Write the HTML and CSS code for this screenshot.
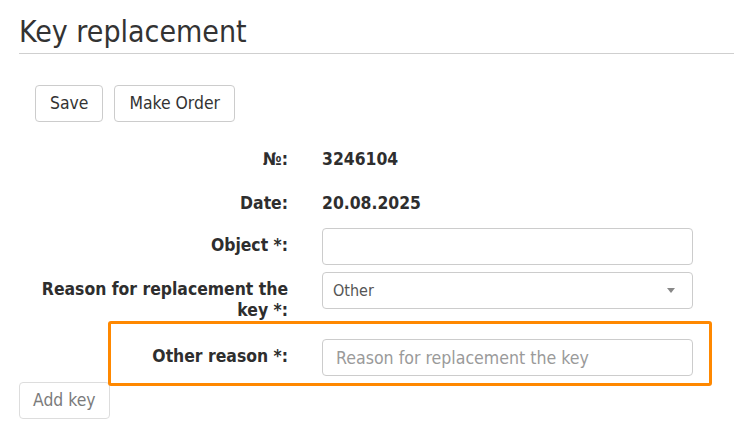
FILE: index.html
```html
<!DOCTYPE html>
<html lang="en">
<head>
<meta charset="utf-8">
<title>Key replacement</title>
<link rel="stylesheet" href="styles.css">
</head>
<body>
<div class="page">
  <header class="page-header">
    <h1>Key replacement</h1>
  </header>

  <div class="toolbar">
    <button class="btn" type="button">Save</button>
    <button class="btn" type="button">Make Order</button>
  </div>

  <form class="form">
    <div class="row row-first">
      <div class="label">№:</div>
      <div class="static">3246104</div>
    </div>
    <div class="row row-date">
      <div class="label">Date:</div>
      <div class="static">20.08.2025</div>
    </div>
    <div class="row row-object">
      <label class="label" for="object">Object *:</label>
      <input class="input" id="object" type="text">
    </div>
    <div class="row row-reason">
      <div class="label">Reason for replacement the key *:</div>
      <div class="select">
        <span class="select-text">Other</span>
        <span class="caret"></span>
      </div>
    </div>
    <div class="row row-other">
      <label class="label" for="other">Other reason *:</label>
      <input class="input input-other" id="other" type="text" placeholder="Reason for replacement the key">
      <div class="highlight"></div>
    </div>
  </form>

  <button class="btn btn-disabled" type="button">Add key</button>
</div>
</body>
</html>
```

FILE: styles.css
```css
* {
  box-sizing: border-box;
}

html, body {
  margin: 0;
  padding: 0;
  background: #fff;
}

body {
  font-family: "DejaVu Sans Condensed", "DejaVu Sans", sans-serif;
  font-stretch: semi-condensed;
  font-size: 17.4px;
  line-height: 21px;
  color: #333;
}

.page {
  padding: 16px 0 0 19px;
}

.page-header {
  border-bottom: 1px solid #cfcfcf;
  padding-bottom: 5px;
}

.page-header h1 {
  margin: 0;
  font-size: 30px;
  line-height: 32px;
  font-weight: normal;
  color: #333;
}

.toolbar {
  display: flex;
  gap: 11px;
  margin: 31px 0 0 16px;
}

.btn {
  font-family: inherit;
  font-stretch: inherit;
  font-size: 17.4px;
  line-height: 21px;
  color: #333;
  background: #fff;
  border: 1px solid #ccc;
  border-radius: 4px;
  padding: 7px 14px;
  height: 37px;
  cursor: pointer;
}

.form {
  display: flex;
  flex-direction: column;
  margin-top: 20px;
  width: 674px;
}

.row {
  display: grid;
  grid-template-columns: 269px 371px;
  column-gap: 34px;
  align-items: start;
  position: relative;
}

.row-date {
  margin-top: 9px;
}

.row-object {
  margin-top: 7px;
}

.row-reason {
  margin-top: 7px;
}

.row-other {
  margin-top: 18px;
}

.label {
  display: block;
  text-align: right;
  font-weight: bold;
  padding-top: 7px;
  color: #2e2e2e;
}

.static {
  font-weight: bold;
  padding: 7px 0;
  color: #2e2e2e;
}

.input {
  font-family: inherit;
  font-stretch: inherit;
  font-size: 17.6px;
  height: 37px;
  width: 371px;
  border: 1px solid #ccc;
  border-radius: 4px;
  padding: 0 12px 0 13px;
  color: #555;
  background: #fff;
  outline: none;
}

.input::placeholder {
  color: #9a9a9a;
}

.select {
  display: flex;
  align-items: center;
  justify-content: space-between;
  height: 37px;
  border: 1px solid #ccc;
  border-radius: 4px;
  padding: 0 17px 0 10px;
  background: #fff;
}

.select-text {
  font-size: 16px;
  color: #555;
}

.caret {
  width: 0;
  height: 0;
  border-left: 4px solid transparent;
  border-right: 4px solid transparent;
  border-top: 5px solid #888;
}

.highlight {
  position: absolute;
  left: 89px;
  top: -18px;
  right: -19px;
  bottom: -10px;
  border: 3px solid #ff8800;
  border-radius: 3px;
  pointer-events: none;
}

.btn-disabled {
  margin-top: 6px;
  color: #7b7b7b;
  border-color: #ddd;
  cursor: not-allowed;
  padding: 7px 13px 7px 13px;
}
```
